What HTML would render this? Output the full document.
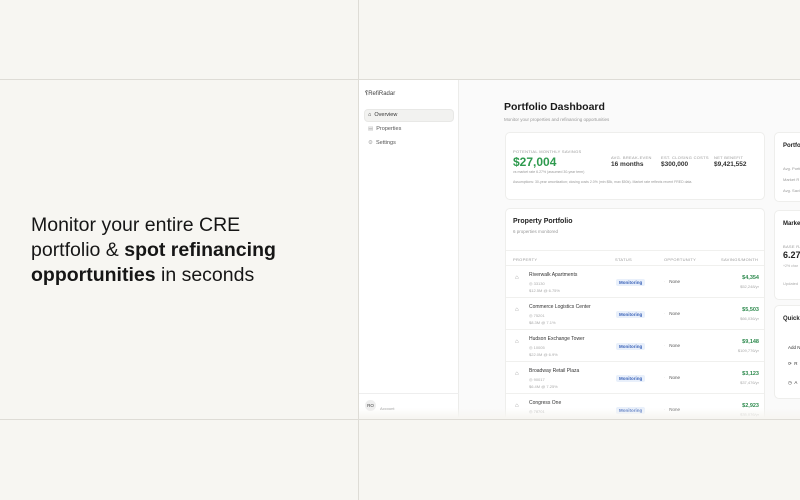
<!DOCTYPE html>
<html><head><meta charset="utf-8"><style>
*{margin:0;padding:0;box-sizing:border-box}
body{width:800px;height:500px;overflow:hidden;background:#f7f6f2;font-family:"Liberation Sans",sans-serif;position:relative;color:#1a1a1a}
.a{position:absolute}
.hl{position:absolute;left:0;width:800px;height:1px;background:#dedcd6}
.vl{position:absolute;top:0;height:500px;width:1px;background:#dedcd6}
.card{position:absolute;background:#fff;border:1px solid #eeeeec;border-radius:5px}
.t{position:absolute;white-space:nowrap}
.g{color:#999;font-size:4px;letter-spacing:.3px}
.row{position:absolute;left:0;width:260px;height:32px;border-top:1px solid #f0f0ee}
.badge{position:absolute;left:110px;top:13px;background:#e9f0fb;color:#3a62b8;font-size:4.5px;padding:1px 3px;border-radius:2px;font-weight:bold}
</style></head><body>
<div class="hl" style="top:79px"></div>
<div class="hl" style="top:419px"></div>
<div class="vl" style="left:358px"></div>

<div class="t" style="left:31px;top:213px;font-size:19.5px;line-height:25px;color:#161616">Monitor your entire CRE<br>portfolio &amp; <b>spot refinancing</b><br><b>opportunities</b> in seconds</div>

<!-- app -->
<div class="a" style="left:359px;top:80px;width:441px;height:338px;background:#fafafa;overflow:hidden">
  <div class="a" style="left:0;top:0;width:100px;height:338px;background:#fff;border-right:1px solid #ececea"></div>
  <div class="t" style="left:6px;top:10px;font-size:6px;color:#444"><span style="font-weight:bold">&#x2E2E;</span>RefiRadar</div>
  <div class="a" style="left:5px;top:29px;width:90px;height:13px;background:#f2f2f0;border-radius:4px;border:1px solid #e8e8e6"></div>
  <div class="t" style="left:9px;top:32px;font-size:5.5px;color:#333">⌂ &nbsp;Overview</div>
  <div class="t" style="left:9px;top:46px;font-size:5.5px;color:#555"><span style="color:#aaa">▤</span> &nbsp;Properties</div>
  <div class="t" style="left:9px;top:60px;font-size:5.5px;color:#555"><span style="color:#aaa">⚙</span> &nbsp;Settings</div>
  <div class="a" style="left:0;top:313px;width:100px;height:1px;background:#eee"></div>
  <div class="a" style="left:6px;top:320px;width:11px;height:11px;border-radius:50%;background:#eee;font-size:4.5px;text-align:center;line-height:11px;color:#444">RO</div>
  <div class="t" style="left:21px;top:326px;font-size:4px;color:#999">Account</div>

  <div class="t" style="left:145px;top:21px;font-size:10.5px;font-weight:bold;color:#1a1a1a">Portfolio Dashboard</div>
  <div class="t" style="left:145px;top:37px;font-size:4.5px;color:#999">Monitor your properties and refinancing opportunities</div>

  <div class="card" style="left:146px;top:52px;width:260px;height:68px">
    <div class="t g" style="left:7px;top:16px">POTENTIAL MONTHLY SAVINGS</div>
    <div class="t" style="left:7px;top:22px;font-size:12px;font-weight:bold;color:#2e9a4e">$27,004</div>
    <div class="t" style="left:7px;top:37px;font-size:3.5px;color:#999">vs market rate 6.27% (assumed 30-year term)</div>
    <div class="t" style="left:7px;top:47px;font-size:3.5px;color:#999">Assumptions: 30-year amortization; closing costs 2.0% (min $5k, max $50k). Market rate reflects recent FRED data.</div>
    <div class="t g" style="left:105px;top:22px">AVG. BREAK-EVEN</div>
    <div class="t" style="left:105px;top:28px;font-size:6.5px;font-weight:bold;color:#333">16 months</div>
    <div class="t g" style="left:155px;top:22px">EST. CLOSING COSTS</div>
    <div class="t" style="left:155px;top:28px;font-size:6.5px;font-weight:bold;color:#333">$300,000</div>
    <div class="t g" style="left:208px;top:22px">NET BENEFIT</div>
    <div class="t" style="left:208px;top:28px;font-size:6.5px;font-weight:bold;color:#333">$9,421,552</div>
  </div>

  <div class="card" style="left:146px;top:128px;width:260px;height:230px;overflow:hidden">
    <div class="t" style="left:7px;top:9px;font-size:7px;font-weight:bold;color:#222">Property Portfolio</div>
    <div class="t" style="left:7px;top:20px;font-size:4.5px;color:#999">6 properties monitored</div>
    <div class="a" style="left:0;top:41px;width:260px;height:1px;background:#f0f0ee"></div>
    <div class="t g" style="left:7px;top:48px">PROPERTY</div>
    <div class="t g" style="left:109px;top:48px">STATUS</div>
    <div class="t g" style="left:158px;top:48px">OPPORTUNITY</div>
    <div class="t g" style="left:215px;top:48px">SAVINGS/MONTH</div>
    <div class="row" style="top:56px"><div class="t" style="left:9px;top:9px;font-size:6px;color:#999">⌂</div><div class="t" style="left:23px;top:6px;font-size:5px;color:#333">Riverwalk Apartments</div><div class="t" style="left:23px;top:15px;font-size:4px;color:#aaa">◎ 33130</div><div class="t" style="left:23px;top:22px;font-size:4px;color:#aaa">$12.5M @ 6.75%</div><div class="badge">Monitoring</div><div class="t" style="left:158px;top:13px;font-size:4.5px;color:#555"><span style="color:#ccc">·</span> &nbsp; None</div><div class="t" style="right:7px;top:9px;font-size:5.5px;font-weight:bold;color:#2e8a4e">$4,354</div><div class="t" style="right:7px;top:18px;font-size:4px;color:#aaa">$52,248/yr</div></div>
    <div class="row" style="top:88px"><div class="t" style="left:9px;top:9px;font-size:6px;color:#999">⌂</div><div class="t" style="left:23px;top:6px;font-size:5px;color:#333">Commerce Logistics Center</div><div class="t" style="left:23px;top:15px;font-size:4px;color:#aaa">◎ 75201</div><div class="t" style="left:23px;top:22px;font-size:4px;color:#aaa">$8.3M @ 7.1%</div><div class="badge">Monitoring</div><div class="t" style="left:158px;top:13px;font-size:4.5px;color:#555"><span style="color:#ccc">·</span> &nbsp; None</div><div class="t" style="right:7px;top:9px;font-size:5.5px;font-weight:bold;color:#2e8a4e">$5,503</div><div class="t" style="right:7px;top:18px;font-size:4px;color:#aaa">$66,036/yr</div></div>
    <div class="row" style="top:120px"><div class="t" style="left:9px;top:9px;font-size:6px;color:#999">⌂</div><div class="t" style="left:23px;top:6px;font-size:5px;color:#333">Hudson Exchange Tower</div><div class="t" style="left:23px;top:15px;font-size:4px;color:#aaa">◎ 10005</div><div class="t" style="left:23px;top:22px;font-size:4px;color:#aaa">$22.0M @ 6.9%</div><div class="badge">Monitoring</div><div class="t" style="left:158px;top:13px;font-size:4.5px;color:#555"><span style="color:#ccc">·</span> &nbsp; None</div><div class="t" style="right:7px;top:9px;font-size:5.5px;font-weight:bold;color:#2e8a4e">$9,148</div><div class="t" style="right:7px;top:18px;font-size:4px;color:#aaa">$109,776/yr</div></div>
    <div class="row" style="top:152px"><div class="t" style="left:9px;top:9px;font-size:6px;color:#999">⌂</div><div class="t" style="left:23px;top:6px;font-size:5px;color:#333">Broadway Retail Plaza</div><div class="t" style="left:23px;top:15px;font-size:4px;color:#aaa">◎ 90017</div><div class="t" style="left:23px;top:22px;font-size:4px;color:#aaa">$6.4M @ 7.25%</div><div class="badge">Monitoring</div><div class="t" style="left:158px;top:13px;font-size:4.5px;color:#555"><span style="color:#ccc">·</span> &nbsp; None</div><div class="t" style="right:7px;top:9px;font-size:5.5px;font-weight:bold;color:#2e8a4e">$3,123</div><div class="t" style="right:7px;top:18px;font-size:4px;color:#aaa">$37,476/yr</div></div>
    <div class="row" style="top:184px"><div class="t" style="left:9px;top:9px;font-size:6px;color:#999">⌂</div><div class="t" style="left:23px;top:6px;font-size:5px;color:#333">Congress One</div><div class="t" style="left:23px;top:15px;font-size:4px;color:#aaa">◎ 78701</div><div class="t" style="left:23px;top:22px;font-size:4px;color:#aaa">$10.9M @ 6.9%</div><div class="badge">Monitoring</div><div class="t" style="left:158px;top:13px;font-size:4.5px;color:#555"><span style="color:#ccc">·</span> &nbsp; None</div><div class="t" style="right:7px;top:9px;font-size:5.5px;font-weight:bold;color:#2e8a4e">$2,923</div><div class="t" style="right:7px;top:18px;font-size:4px;color:#aaa">$35,076/yr</div></div>
  </div>

  <div class="card" style="left:415px;top:52px;width:60px;height:70px">
    <div class="t" style="left:8px;top:10px;font-size:6px;font-weight:bold;color:#222">Portfolio</div>
    <div class="t" style="left:8px;top:33px;font-size:4px;color:#999">Avg. Portf</div>
    <div class="t" style="left:8px;top:44px;font-size:4px;color:#999">Market R</div>
    <div class="t" style="left:8px;top:55px;font-size:4px;color:#999">Avg. Savi</div>
  </div>
  <div class="card" style="left:415px;top:130px;width:60px;height:90px">
    <div class="t" style="left:8px;top:10px;font-size:6px;font-weight:bold;color:#222">Market</div>
    <div class="t g" style="left:8px;top:33px">BASE RA</div>
    <div class="t" style="left:8px;top:39px;font-size:9px;font-weight:bold;color:#222">6.27</div>
    <div class="t" style="left:8px;top:53px;font-size:3.5px;color:#aaa">+2% char</div>
    <div class="t" style="left:8px;top:70px;font-size:4px;color:#aaa">Updated</div>
  </div>
  <div class="card" style="left:415px;top:225px;width:60px;height:94px">
    <div class="t" style="left:8px;top:10px;font-size:6px;font-weight:bold;color:#222">Quick</div>
    <div class="t" style="left:13px;top:39px;font-size:4.5px;color:#333">Add N</div>
    <div class="t" style="left:13px;top:55px;font-size:4.5px;color:#333">⟳ &nbsp;R</div>
    <div class="t" style="left:13px;top:74px;font-size:4.5px;color:#333">◷ &nbsp;A</div>
  </div>
  <div class="a" style="left:0;top:328px;width:441px;height:10px;background:linear-gradient(rgba(247,246,242,0),#f7f6f2)"></div>
</div>
</body></html>
